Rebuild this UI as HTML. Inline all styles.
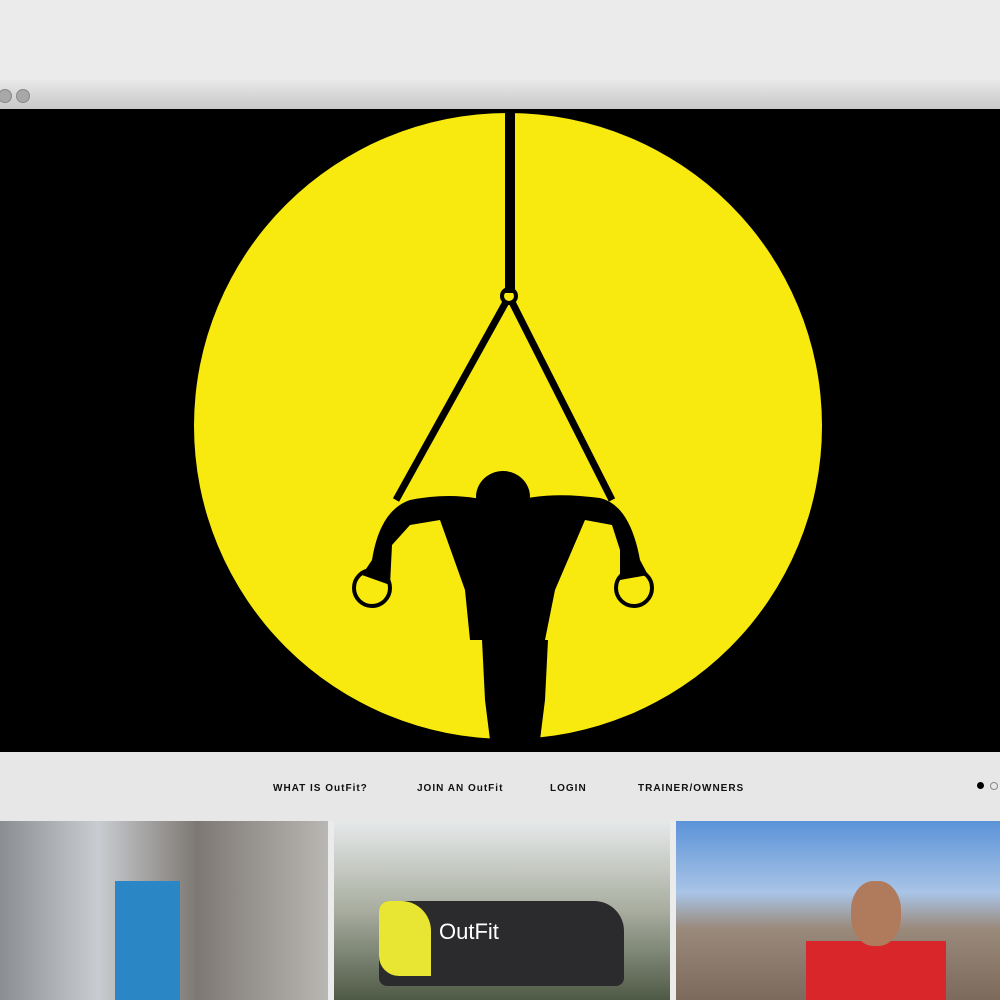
<!DOCTYPE html>
<html><head><style>
body{margin:0;width:1000px;height:1000px;overflow:hidden;background:#ebebeb;position:relative;font-family:"Liberation Sans",sans-serif}
.bar{position:absolute;top:80px;left:0;width:1000px;height:29px;background:linear-gradient(#e8e8e8,#c8c8c8)}
.btn{position:absolute;top:89px;width:12px;height:12px;border-radius:50%;background:#a8a8a8;border:1px solid #888}
.hero{position:absolute;top:109px;left:0;width:1000px;height:643px;background:#000}
.nav{position:absolute;top:752px;left:0;width:1000px;height:69px;background:#e6e7e6}
.nav span{position:absolute;top:31px;font-size:10px;font-weight:bold;letter-spacing:1px;color:#111}
.ph{position:absolute;top:821px;height:179px}
</style></head><body>
<div class="bar"></div>
<div class="btn" style="left:-2px"></div><div class="btn" style="left:16px"></div>
<div class="hero">
<svg width="1000" height="643" viewBox="0 109 1000 643">
<ellipse cx="508" cy="426" rx="314" ry="313" fill="#f8ea0f"/>
<rect x="505" y="113" width="10" height="180" fill="#000"/>
<circle cx="509" cy="296" r="7" fill="none" stroke="#000" stroke-width="4"/>
<path d="M506 302 L396 500 M512 302 L612 500" stroke="#000" stroke-width="7" fill="none"/>
<ellipse cx="503" cy="497" rx="27" ry="26" fill="#000"/>
<path d="M410 500 Q380 510 372 560 L362 575 L390 585 L392 545 L410 525 L440 520 L465 590 L470 640 L545 640 L555 590 L585 520 L612 525 L620 550 L620 580 L648 575 L640 560 Q630 505 600 498 Q540 490 503 505 Q460 490 410 500Z" fill="#000"/>
<circle cx="372" cy="588" r="18" fill="none" stroke="#000" stroke-width="4"/>
<circle cx="634" cy="588" r="18" fill="none" stroke="#000" stroke-width="4"/>
<path d="M482 640 L485 700 L490 740 L540 740 L545 700 L548 640Z" fill="#000"/>
</svg>
</div>
<div class="nav">
<span style="left:273px">WHAT IS OutFit?</span>
<span style="left:417px">JOIN AN OutFit</span>
<span style="left:550px">LOGIN</span>
<span style="left:638px">TRAINER/OWNERS</span>
<div style="position:absolute;left:977px;top:30px;width:7px;height:7px;border-radius:50%;background:#000"></div>
<div style="position:absolute;left:990px;top:30px;width:6px;height:6px;border-radius:50%;border:1px solid #888"></div>
</div>
<div class="ph" style="left:0;width:328px;background:linear-gradient(90deg,#8a8e93,#c9ccd0 30%,#7d7873 60%,#b9b7b3)">
<div style="position:absolute;left:115px;top:60px;width:65px;height:119px;background:#2a86c4"></div>
</div>
<div class="ph" style="left:334px;width:336px;background:linear-gradient(#e6e9ea,#a8ad9f 50%,#4f5a46)">
<div style="position:absolute;left:45px;top:80px;width:245px;height:85px;background:#2b2b2d;border-radius:10px 30px 8px 8px"></div>
<div style="position:absolute;left:45px;top:80px;width:52px;height:75px;background:#e8e633;border-radius:10px 30px 0 20px"></div>
<div style="position:absolute;left:105px;top:98px;color:#fff;font-size:22px">OutFit</div>
</div>
<div class="ph" style="left:676px;width:324px;background:linear-gradient(#5b93d9,#a9c4e6 40%,#9a8a7c 60%,#7c6a5c)">
<div style="position:absolute;left:130px;top:120px;width:140px;height:59px;background:#d8262a"></div>
<div style="position:absolute;left:175px;top:60px;width:50px;height:65px;background:#b07a5c;border-radius:45%"></div>
</div>
</body></html>
